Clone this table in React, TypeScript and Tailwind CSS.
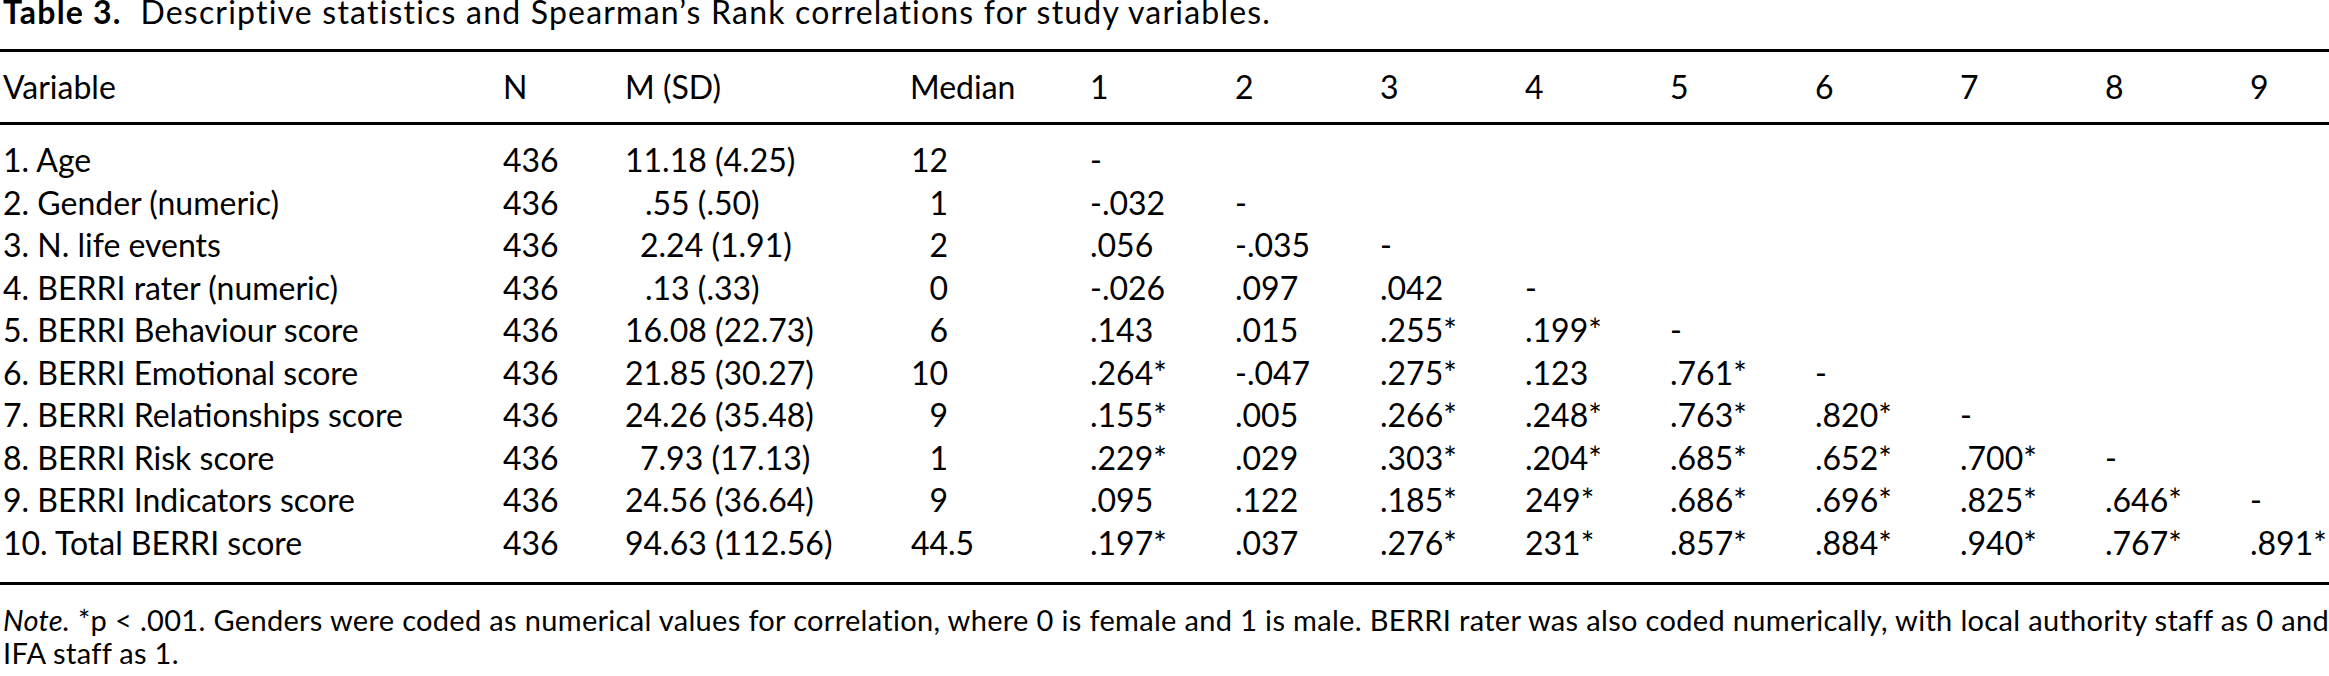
import React from "react"

type Row = {
  label: string
  n: string
  msd: string
  indent: string
  median: string
  r: string[]
}

const rows: Row[] = [
  { label: "1. Age", n: "436", msd: "11.18 (4.25)", indent: "pl-0", median: "12", r: ["-"] },
  { label: "2. Gender (numeric)", n: "436", msd: ".55 (.50)", indent: "pl-[20px]", median: "1", r: ["-.032", "-"] },
  { label: "3. N. life events", n: "436", msd: "2.24 (1.91)", indent: "pl-[15px]", median: "2", r: [".056", "-.035", "-"] },
  { label: "4. BERRI rater (numeric)", n: "436", msd: ".13 (.33)", indent: "pl-[20px]", median: "0", r: ["-.026", ".097", ".042", "-"] },
  { label: "5. BERRI Behaviour score", n: "436", msd: "16.08 (22.73)", indent: "pl-0", median: "6", r: [".143", ".015", ".255*", ".199*", "-"] },
  { label: "6. BERRI Emotional score", n: "436", msd: "21.85 (30.27)", indent: "pl-0", median: "10", r: [".264*", "-.047", ".275*", ".123", ".761*", "-"] },
  { label: "7. BERRI Relationships score", n: "436", msd: "24.26 (35.48)", indent: "pl-0", median: "9", r: [".155*", ".005", ".266*", ".248*", ".763*", ".820*", "-"] },
  { label: "8. BERRI Risk score", n: "436", msd: "7.93 (17.13)", indent: "pl-[15px]", median: "1", r: [".229*", ".029", ".303*", ".204*", ".685*", ".652*", ".700*", "-"] },
  { label: "9. BERRI Indicators score", n: "436", msd: "24.56 (36.64)", indent: "pl-0", median: "9", r: [".095", ".122", ".185*", "249*", ".686*", ".696*", ".825*", ".646*", "-"] },
  { label: "10. Total BERRI score", n: "436", msd: "94.63 (112.56)", indent: "pl-0", median: "44.5", r: [".197*", ".037", ".276*", "231*", ".857*", ".884*", ".940*", ".767*", ".891*"] },
]

const cols = "grid grid-cols-[503px_122px_285px_180px_145px_145px_145px_145px_145px_145px_145px_145px_1fr]"

// integer part right-aligned so "44.5" lines up with the whole numbers
function Median({ value }: { value: string }) {
  const [whole, frac] = value.split(".")
  return (
    <div className="flex">
      <span className="w-[38px] text-right">{whole}</span>
      {frac && <span>.{frac}</span>}
    </div>
  )
}

export default function App() {
  return (
    <div className="w-[2329px] h-[676px] overflow-hidden bg-white text-black font-['Lato',sans-serif]">
      {/* caption sits flush with the top edge, as in the scan */}
      <p className="-mt-[5px] pl-[3px] text-[32px] leading-[34px] tracking-[1.2px] whitespace-nowrap">
        <span className="font-bold">Table 3.</span>&nbsp; Descriptive statistics and Spearman’s Rank correlations for study variables.
      </p>

      <div className="mt-[20px] border-t-[3px] border-black">
        <div className={`${cols} h-[70px] items-center text-[32px]`}>
          <div className="pl-[3px]">Variable</div>
          <div>N</div>
          <div>M (SD)</div>
          <div>Median</div>
          {[1, 2, 3, 4, 5, 6, 7, 8, 9].map((c) => (
            <div key={c}>{c}</div>
          ))}
        </div>
      </div>

      <div className="border-t-[3px] border-black pt-[11px] pb-[21px] text-[32px]">
        {rows.map((row) => (
          <div key={row.label} className={`${cols} h-[42.5px] items-center whitespace-nowrap`}>
            <div className="pl-[3px]">{row.label}</div>
            <div>{row.n}</div>
            <div className={row.indent}>{row.msd}</div>
            <Median value={row.median} />
            {Array.from({ length: 9 }).map((_, i) => (
              <div key={i}>{row.r[i] ?? ""}</div>
            ))}
          </div>
        ))}
      </div>

      <div className="border-t-[3px] border-black pt-[18px] pl-[3px] text-[29px] leading-[33px] tracking-[0.3px]">
        <p className="[text-align-last:justify] whitespace-nowrap">
          <span className="italic">Note.</span> *p &lt; .001. Genders were coded as numerical values for correlation, where 0 is female and 1 is male. BERRI rater was also coded numerically, with local authority staff as 0 and
        </p>
        <p>IFA staff as 1.</p>
      </div>
    </div>
  )
}
